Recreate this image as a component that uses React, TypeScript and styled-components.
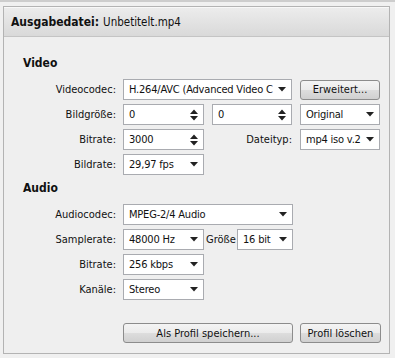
import styled, { createGlobalStyle } from "styled-components";

const Global = createGlobalStyle`
body{
margin:0;
background:#f0f0f0;
font-family:"DejaVu Sans Condensed","DejaVu Sans",Tahoma,sans-serif;
font-stretch:condensed;
font-size:11px;
color:#111;
}
`

const Page = styled.div /*style*/ `
width:395px;
height:358px;
background:#f0f0f0;
border-top:2px solid #cdcdcd;
box-sizing:border-box;
padding:4px 5px 0 3px;
`

const Panel = styled.div /*style*/ `
height:348px;
box-sizing:border-box;
border:1px solid #b3b3b3;
background:#efefef;
display:flex;
flex-direction:column;
`

const Header = styled.div /*style*/ `
height:28px;
display:flex;
align-items:center;
padding-left:7px;
font-size:12px;
background:linear-gradient(#ececec, #d9d9d9);
border-top:1px solid #f8f8f8;
border-bottom:1px solid #c4c4c4;
b{
font-weight:700;
margin-right:4px;
}
span{
font-size:11.5px;
}
`

const Body = styled.div /*style*/ `
flex:1;
display:flex;
flex-direction:column;
padding:18px 0 0 19px;
`

const SectionTitle = styled.div<{ $top?: number }> /*style*/ `
height:16px;
line-height:16px;
font-weight:700;
font-size:12px;
margin-top:${p => p.$top ?? 0}px;
margin-bottom:8px;
`

const Row = styled.div<{ $gap?: number }> /*style*/ `
display:flex;
align-items:center;
height:21px;
margin-bottom:4px;
gap:${p => p.$gap ?? 8}px;
`

const Label = styled.span<{ $w?: number, $left?: boolean, $mr?: number }> /*style*/ `
width:${p => p.$w ?? 93}px;
margin-right:${p => p.$mr ?? (p.$w ? 0 : -1)}px;
text-align:${p => (p.$left ? "left" : "right")};
white-space:nowrap;
`

const Field = styled.div<{ $w: number }> /*style*/ `
width:${p => p.$w}px;
height:21px;
box-sizing:border-box;
background:#fff;
border:1px solid #a9abb0;
display:flex;
align-items:center;
padding:0 5px 0 5px;
gap:3px;
span{
flex:1;
overflow:hidden;
white-space:nowrap;
letter-spacing:-0.2px;
}
`

const Button = styled.button<{ $w: number }> /*style*/ `
all:unset;
width:${p => p.$w}px;
height:20px;
box-sizing:border-box;
border:1px solid #8c8c8c;
border-radius:3px;
background:linear-gradient(#f4f4f4 0%, #ebebeb 50%, #dddddd 51%, #d0d0d0 100%);
display:flex;
align-items:center;
justify-content:center;
font-size:11px;
color:#111;
`

const Footer = styled.div /*style*/ `
display:flex;
gap:7px;
margin-top:19px;
padding-left:100px;
`

const Arrow = () => (
    <svg width="8" height="5" viewBox="0 0 8 5"><path d="M0 0H8L4 4.5Z" fill="#222" /></svg>
)

const Spin = () => (
    <svg width="8" height="12" viewBox="0 0 8 12"><path d="M0 5H8L4 0.5Z M0 7H8L4 11.5Z" fill="#222" /></svg>
)

const Combo = ({ w, text }: { w: number, text: string }) => (
    <Field $w={w}><span>{text}</span><Arrow /></Field>
)

const SpinBox = ({ w, text }: { w: number, text: string }) => (
    <Field $w={w}><span>{text}</span><Spin /></Field>
)

export default function App() {
    return (
        <Page>
            <Global />
            <Panel>
                <Header><b>Ausgabedatei:</b><span>Unbetitelt.mp4</span></Header>
                <Body>
                    <SectionTitle>Video</SectionTitle>
                    <Row>
                        <Label>Videocodec:</Label>
                        <Combo w={169} text="H.264/AVC (Advanced Video C" />
                        <Button $w={80}>Erweitert...</Button>
                    </Row>
                    <Row>
                        <Label>Bildgröße:</Label>
                        <SpinBox w={81} text="0" />
                        <SpinBox w={80} text="0" />
                        <Combo w={80} text="Original" />
                    </Row>
                    <Row>
                        <Label>Bitrate:</Label>
                        <SpinBox w={81} text="3000" />
                        <Label $w={80}>Dateityp:</Label>
                        <Combo w={80} text="mp4 iso v.2" />
                    </Row>
                    <Row>
                        <Label>Bildrate:</Label>
                        <Combo w={81} text="29,97 fps" />
                    </Row>
                    <SectionTitle $top={1}>Audio</SectionTitle>
                    <Row>
                        <Label>Audiocodec:</Label>
                        <Combo w={170} text="MPEG-2/4 Audio" />
                    </Row>
                    <Row $gap={2}>
                        <Label $mr={5}>Samplerate:</Label>
                        <Combo w={81} text="48000 Hz" />
                        <Label $w={29} $left>Größe</Label>
                        <Combo w={56} text="16 bit" />
                    </Row>
                    <Row>
                        <Label>Bitrate:</Label>
                        <Combo w={81} text="256 kbps" />
                    </Row>
                    <Row>
                        <Label>Kanäle:</Label>
                        <Combo w={81} text="Stereo" />
                    </Row>
                    <Footer>
                        <Button $w={170}>Als Profil speichern...</Button>
                        <Button $w={81}>Profil löschen</Button>
                    </Footer>
                </Body>
            </Panel>
        </Page>
    )
}
